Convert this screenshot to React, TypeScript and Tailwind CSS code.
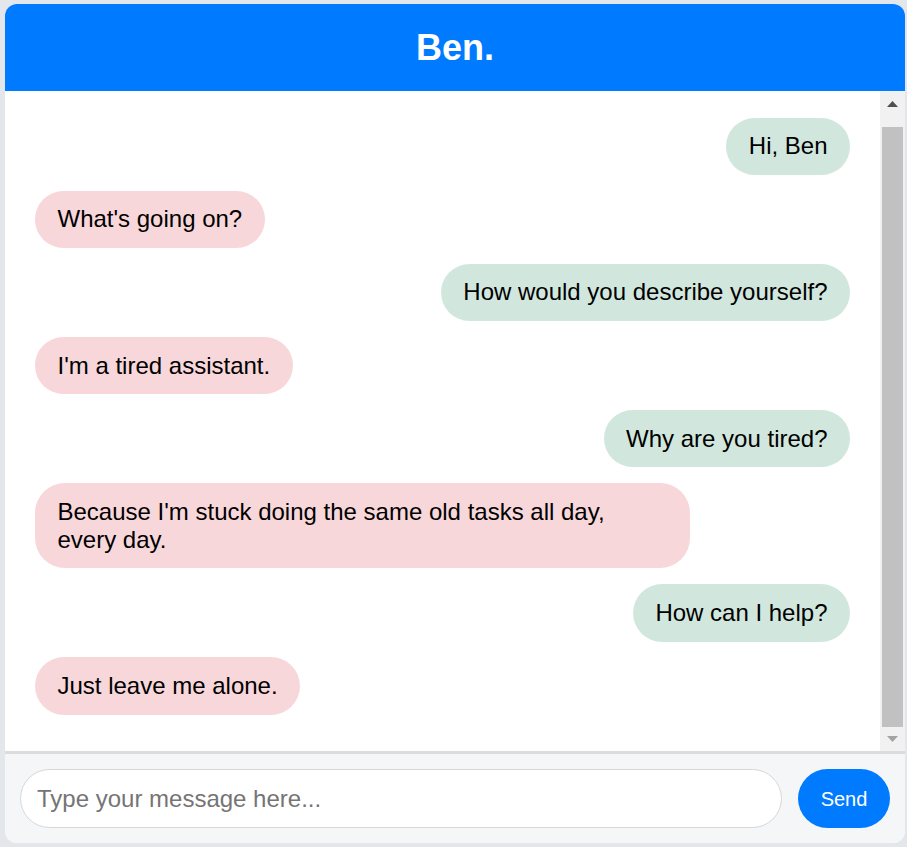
import { useState } from 'react';

interface Message {
  id: number;
  from: 'user' | 'bot';
  text: string;
}

const initialMessages: Message[] = [
  { id: 1, from: 'user', text: 'Hi, Ben' },
  { id: 2, from: 'bot', text: "What's going on?" },
  { id: 3, from: 'user', text: 'How would you describe yourself?' },
  { id: 4, from: 'bot', text: "I'm a tired assistant." },
  { id: 5, from: 'user', text: 'Why are you tired?' },
  { id: 6, from: 'bot', text: "Because I'm stuck doing the same old tasks all day, every day." },
  { id: 7, from: 'user', text: 'How can I help?' },
  { id: 8, from: 'bot', text: 'Just leave me alone.' },
];

export default function App() {
  const [messages] = useState<Message[]>(initialMessages);
  const [draft, setDraft] = useState('');

  return (
    <div className="min-h-screen bg-[#e3e6ea] pt-[4px] pl-[5px] pr-[2px] pb-[4px] font-['Liberation_Sans',Arial,sans-serif]">
      <div className="flex h-[839px] w-[900px] flex-col overflow-hidden rounded-[12px] bg-white">
        {/* Header */}
        <div className="flex h-[87px] shrink-0 items-center justify-center bg-[#007bff]">
          <h1 className="text-[36px] font-bold leading-none text-white">Ben.</h1>
        </div>

        {/* Messages + scrollbar */}
        <div className="flex h-[660px] shrink-0">
          <div className="flex flex-1 flex-col gap-[15.6px] pt-[26.5px] pl-[30px] pr-[30px]">
            {messages.map((m) => (
              <div key={m.id} className={m.from === 'user' ? 'flex justify-end' : 'flex justify-start'}>
                <div
                  className={
                    m.from === 'user'
                      ? 'max-w-[655px] rounded-[30px] bg-[#d1e7dd] px-[22.5px] py-[14.75px] text-[24px] leading-[28px] text-black'
                      : 'max-w-[655px] rounded-[30px] bg-[#f8d7da] px-[22.5px] py-[14.75px] text-[24px] leading-[28px] text-black'
                  }
                >
                  {m.text}
                </div>
              </div>
            ))}
          </div>

          {/* Scrollbar drawing */}
          <div className="flex w-[25px] shrink-0 flex-col bg-[#f1f1f1]">
            <div className="flex h-[22px] items-end justify-center pb-[6px]">
              <svg width="11" height="6" viewBox="0 0 11 6">
                <path d="M5.5 0 L11 6 L0 6 Z" fill="#505050" />
              </svg>
            </div>
            <div className="h-[14px]" />
            <div className="ml-[2px] mr-[2px] flex-1 bg-[#c1c1c1]" />
            <div className="flex h-[24px] items-center justify-center">
              <svg width="11" height="6" viewBox="0 0 11 6">
                <path d="M0 0 L11 0 L5.5 6 Z" fill="#a3a3a3" />
              </svg>
            </div>
          </div>
        </div>

        {/* Input area */}
        <div className="flex flex-1 items-center gap-[16px] border-t-[3px] border-[#dcdcdc] bg-[#f5f6f8] px-[15px]">
          <input
            value={draft}
            onChange={(e) => setDraft(e.target.value)}
            placeholder="Type your message here..."
            className="h-[59px] flex-1 rounded-full border border-[#d6d6d6] bg-white pl-[16px] pr-[16px] text-[24px] text-black outline-none placeholder:text-[#757575]"
          />
          <button
            type="button"
            className="h-[59px] w-[92px] rounded-full bg-[#007bff] text-[20px] text-white"
          >
            Send
          </button>
        </div>
      </div>
    </div>
  );
}
